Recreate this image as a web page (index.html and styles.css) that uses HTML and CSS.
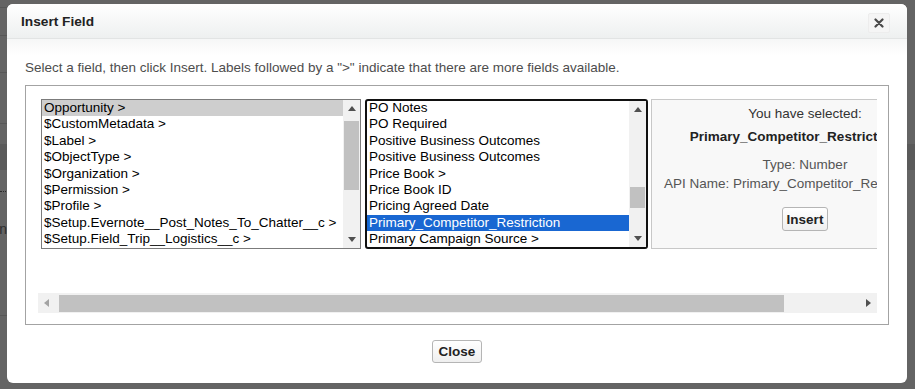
FILE: index.html
```html
<!DOCTYPE html>
<html lang="en">

<head>
    <meta charset="UTF-8">
    <title>Insert Field</title>
    <link rel="stylesheet" href="styles.css">
</head>

<body>
    <!-- page behind the modal -->
    <div class="page">
        <div class="ln ln-a"></div>
        <div class="ln ln-b"></div>
        <div class="ln ln-c"></div>
        <div class="ln ln-d"></div>
        <div class="ln ln-e"></div>
        <div class="band"></div>
        <div class="ln ln-f"></div>
        <div class="ln ln-g"><div class="stub">Design</div></div>
        <div class="formula">|ABS(number)</div>
    </div>

    <div class="dialog">
        <div class="dialog-head">
            <h2>Insert Field</h2>
            <button type="button" class="btn-x" title="Close">
                <svg width="10" height="10" viewBox="0 0 10 10"><path d="M1.5 1.5 L8.5 8.5 M8.5 1.5 L1.5 8.5" stroke="#4a4a4a" stroke-width="2.2" stroke-linecap="round"/></svg>
            </button>
        </div>

        <div class="dialog-body">
            <p class="intro">Select a field, then click Insert. Labels followed by a "&gt;" indicate that there are more fields available.</p>

            <div class="picker">
                <div class="viewport">
                    <div class="fields">
                        <div class="listbox list-objects">
                            <div class="options">
                                <div class="opt sel-idle">Opportunity &gt;</div>
                                <div class="opt">$CustomMetadata &gt;</div>
                                <div class="opt">$Label &gt;</div>
                                <div class="opt">$ObjectType &gt;</div>
                                <div class="opt">$Organization &gt;</div>
                                <div class="opt">$Permission &gt;</div>
                                <div class="opt">$Profile &gt;</div>
                                <div class="opt">$Setup.Evernote__Post_Notes_To_Chatter__c &gt;</div>
                                <div class="opt">$Setup.Field_Trip__Logistics__c &gt;</div>
                            </div>
                            <div class="vscroll">
                                <div class="arrow"><span class="tri-up"></span></div>
                                <div class="track"><div class="thumb thumb-objects"></div></div>
                                <div class="arrow"><span class="tri-down"></span></div>
                            </div>
                        </div>

                        <div class="listbox list-fields">
                            <div class="options">
                                <div class="opt">PO Notes</div>
                                <div class="opt">PO Required</div>
                                <div class="opt">Positive Business Outcomes</div>
                                <div class="opt">Positive Business Outcomes</div>
                                <div class="opt">Price Book &gt;</div>
                                <div class="opt">Price Book ID</div>
                                <div class="opt">Pricing Agreed Date</div>
                                <div class="opt sel-active">Primary_Competitor_Restriction</div>
                                <div class="opt">Primary Campaign Source &gt;</div>
                            </div>
                            <div class="vscroll">
                                <div class="arrow"><span class="tri-up"></span></div>
                                <div class="track"><div class="thumb thumb-fields"></div></div>
                                <div class="arrow"><span class="tri-down"></span></div>
                            </div>
                        </div>

                        <div class="selected-panel">
                            <p class="sel-label">You have selected:</p>
                            <p class="sel-name">Primary_Competitor_Restriction__c</p>
                            <p class="sel-meta sel-type">Type: Number</p>
                            <p class="sel-meta">API Name: Primary_Competitor_Restriction__c</p>
                            <button type="button" class="btn btn-insert">Insert</button>
                        </div>
                    </div>
                </div>

                <div class="hscroll">
                    <div class="harrow"><span class="tri-left"></span></div>
                    <div class="htrack"><div class="hthumb"></div></div>
                    <div class="harrow"><span class="tri-right"></span></div>
                </div>
            </div>

            <div class="dialog-foot">
                <button type="button" class="btn btn-close">Close</button>
            </div>
        </div>
    </div>
</body>

</html>
```

FILE: styles.css
```css
body {
    margin: 0;
    background-color: #646464;
    font-family: "Liberation Sans", Arial, sans-serif;
    overflow: hidden;
}

/* page behind the overlay */
.page {
    height: 389px;
    overflow: hidden;
}

.ln {
    width: 120px;
    border-bottom: 1px solid #575757;
}

.ln-a { height: 7px; }
.ln-b { height: 27px; }
.ln-c { height: 36px; }
.ln-d { height: 50px; }
.ln-e { height: 20px; border-bottom: 0; }

.band {
    height: 26px;
    background-color: #5a5a5a;
}

.ln-f {
    height: 21px;
    border-bottom: 1px dotted #2a2a2a;
}

.ln-g {
    height: 94px;
}

.stub {
    width: 7px;
    margin-top: 29px;
    direction: rtl;
    white-space: nowrap;
    font-size: 14px;
    color: #2e2e2e;
}

.formula {
    margin: 88px 0 0 222px;
    font-size: 14px;
    line-height: 16px;
    color: #2a2a2a;
}

/* modal */
.dialog {
    position: absolute;
    left: 7px;
    top: 4px;
    width: 900px;
    height: 379px;
    background-color: #fff;
    border-radius: 6px;
    overflow: hidden;
}

.dialog-head {
    height: 34px;
    display: flex;
    align-items: center;
    justify-content: space-between;
    padding: 0 17px 0 14px;
    background: linear-gradient(#ffffff, #eef0f0);
    border-bottom: 1px solid #e2e4e4;
}

.dialog-head h2 {
    margin: 0;
    font-size: 13.7px;
    font-weight: bold;
    color: #222;
}

.btn-x {
    width: 22px;
    height: 20px;
    margin-top: 4px;
    padding: 0;
    border: 1px solid #ededed;
    border-radius: 2px;
    background-color: #f5f5f5;
    display: flex;
    align-items: center;
    justify-content: center;
}

.dialog-body {
    padding: 21px 18px 0;
    background: linear-gradient(#f6f7f7, #ffffff 16px);
}

.intro {
    margin: 0 0 9px;
    font-size: 13.5px;
    line-height: 16px;
    color: #4d4d4d;
    white-space: nowrap;
}

.picker {
    height: 238px;
    border: 1px solid #a3a3a3;
}

.viewport {
    width: 839px;
    height: 195px;
    margin: 12px 0 0 12px;
    overflow: hidden;
}

.fields {
    display: flex;
    gap: 4px;
    padding: 1px 0 0 3px;
}

.listbox {
    display: flex;
    height: 150px;
    box-sizing: border-box;
    background-color: #fff;
    font-size: 13.5px;
    line-height: 16.375px;
    color: #000;
    flex-shrink: 0;
}

.list-objects {
    width: 320px;
    border: 1px solid #7b7b7b;
}

.list-fields {
    width: 283px;
    border: 2px solid #111;
    border-radius: 3px;
}

.options {
    flex: 1;
    overflow: hidden;
    white-space: nowrap;
}

.list-fields .options {
    margin-top: -1px;
}

.opt {
    padding: 0 2px;
    height: 16.375px;
}

.sel-idle {
    background-color: #cecece;
}

.sel-active {
    background-color: #1967d2;
    color: #fff;
}

.vscroll {
    width: 17px;
    display: flex;
    flex-direction: column;
    background-color: #f1f1f1;
}

.arrow {
    height: 17px;
    display: flex;
    align-items: center;
    justify-content: center;
}

.track {
    flex: 1;
}

.thumb {
    margin: 0 1px;
    background-color: #c1c1c1;
}

.thumb-objects {
    margin-top: 4px;
    height: 69px;
}

.thumb-fields {
    margin-top: 69px;
    height: 21px;
}

.tri-up, .tri-down, .tri-left, .tri-right {
    width: 0;
    height: 0;
}

.tri-up {
    border-left: 4px solid transparent;
    border-right: 4px solid transparent;
    border-bottom: 5px solid #505050;
}

.tri-down {
    border-left: 4px solid transparent;
    border-right: 4px solid transparent;
    border-top: 5px solid #505050;
}

.tri-left {
    border-top: 4px solid transparent;
    border-bottom: 4px solid transparent;
    border-right: 5px solid #a3a3a3;
}

.tri-right {
    border-top: 4px solid transparent;
    border-bottom: 4px solid transparent;
    border-left: 5px solid #505050;
}

.selected-panel {
    width: 308px;
    height: 150px;
    margin-left: -1px;
    box-sizing: border-box;
    flex-shrink: 0;
    border: 1px solid #c8c8c8;
    background-color: #f8f8f8;
    text-align: center;
    font-size: 13.5px;
    line-height: 16px;
    padding-top: 6px;
    white-space: nowrap;
}

.selected-panel p {
    margin: 0;
}

.sel-label {
    color: #333;
}

.selected-panel .sel-name {
    margin-top: 7px;
    font-weight: bold;
    color: #222;
}

.sel-meta {
    color: #555;
}

.selected-panel .sel-type {
    margin-top: 12px;
    margin-bottom: 3px;
}

.btn {
    font-family: "Liberation Sans", Arial, sans-serif;
    font-size: 13.5px;
    font-weight: bold;
    color: #222;
    border: 1px solid #b5b5b5;
    border-radius: 3px;
    background: linear-gradient(#ffffff, #efefef);
    padding: 0;
}

.btn-insert {
    width: 46px;
    height: 24px;
    margin-top: 15px;
}

.hscroll {
    width: 839px;
    height: 20px;
    margin-left: 12px;
    display: flex;
    background-color: #f1f1f1;
}

.harrow {
    width: 17px;
    display: flex;
    align-items: center;
    justify-content: center;
}

.htrack {
    flex: 1;
    padding: 2px 0 1px 4px;
}

.hthumb {
    width: 725px;
    height: 17px;
    background-color: #c1c1c1;
}

.dialog-foot {
    margin-top: 15px;
    text-align: center;
}

.btn-close {
    width: 50px;
    height: 23px;
}
```
